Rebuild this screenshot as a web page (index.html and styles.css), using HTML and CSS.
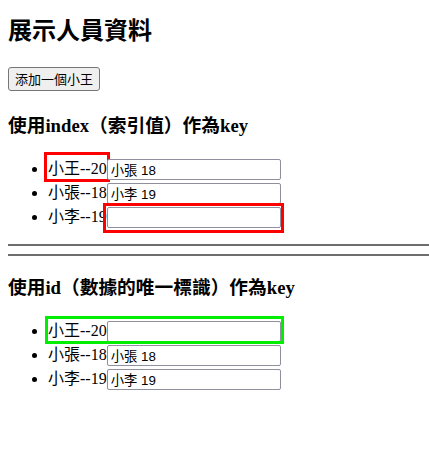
FILE: index.html
```html
<!DOCTYPE html>
<html>
<head>
<meta charset="utf-8">
<link rel="stylesheet" href="styles.css">
</head>
<body>
<div class="app">
  <h2 class="title">展示人員資料</h2>
  <div class="actions"><button class="add-btn">添加一個小王</button></div>
  <h3 class="section-title first">使用index（索引值）作為key</h3>
  <ul class="list">
    <li><span class="row"><span class="name mark-red">小王--20</span><span class="field-wrap"><input class="field" type="text" value="小張 18"></span></span></li>
    <li><span class="row"><span class="name">小張--18</span><span class="field-wrap"><input class="field" type="text" value="小李 19"></span></span></li>
    <li><span class="row"><span class="name">小李--19</span><span class="field-wrap mark-red-input"><input class="field" type="text" value=""></span></span></li>
  </ul>
  <div class="rule rule-top"></div>
  <div class="rule"></div>
  <h3 class="section-title second">使用id（數據的唯一標識）作為key</h3>
  <ul class="list">
    <li><span class="row mark-green"><span class="name">小王--20</span><span class="field-wrap"><input class="field" type="text" value=""></span></span></li>
    <li><span class="row"><span class="name">小張--18</span><span class="field-wrap"><input class="field" type="text" value="小張 18"></span></span></li>
    <li><span class="row"><span class="name">小李--19</span><span class="field-wrap"><input class="field" type="text" value="小李 19"></span></span></li>
  </ul>
</div>
</body>
</html>
```

FILE: styles.css
```css
html, body {
  padding: 0;
  background: #fff;
}
html {
  overflow: hidden;
}
body {
  margin: 8px 0 8px 8px;
  font-family: "Liberation Serif", "Noto Sans CJK TC", serif;
  font-size: 16px;
  color: #000;
  text-spacing-trim: space-all;
}
.app {
  padding-top: 1px;
}
.title {
  font-size: 24px;
  line-height: 28px;
  font-weight: bold;
  margin: 8px 0 0;
}
.actions {
  display: flex;
  margin-top: 22px;
}
.add-btn {
  font-family: "Noto Sans CJK TC", "Liberation Sans", sans-serif;
  font-size: 13px;
  line-height: 20px;
  height: 24px;
  padding: 1px 6px;
  border: 1px solid #767676;
  border-radius: 3px;
  background: #efefef;
  color: #000;
  box-sizing: border-box;
}
.section-title {
  font-size: 18.72px;
  line-height: 22px;
  font-weight: bold;
  margin: 0;
}
.section-title.first {
  margin-top: 24px;
}
.section-title.second {
  margin-top: 21px;
}
.list {
  margin: 20px 0 0;
  padding-left: 40px;
}
.list li {
  height: 24px;
  line-height: 24px;
}
.row {
  display: inline-flex;
  align-items: center;
  height: 24px;
  vertical-align: top;
  position: relative;
}
.name {
  line-height: 24px;
  position: relative;
}
.field-wrap {
  display: flex;
  position: relative;
}
.field {
  font-family: "Liberation Sans", "Noto Sans CJK TC", sans-serif;
  font-size: 13.333px;
  width: 174px;
  height: 21px;
  box-sizing: border-box;
  padding: 1px 3px;
  margin: 0;
  border: 1px solid #8f8f9d;
  border-radius: 2px;
  background: #fff;
  color: #000;
}
.rule {
  margin: 8px 0;
  height: 2px;
  background: #6e6e6e;
}
.rule-top {
  margin-top: 15px;
}
.mark-red::after {
  content: "";
  position: absolute;
  left: -4px;
  right: -3px;
  top: -5px;
  bottom: -1px;
  border: 3px solid #ff0000;
}
.mark-red-input::after {
  content: "";
  position: absolute;
  left: -4px;
  right: -3px;
  top: -4px;
  bottom: -5px;
  border: 3px solid #ff0000;
}
.mark-green::after {
  content: "";
  position: absolute;
  left: -3px;
  right: -3px;
  top: -3px;
  bottom: -1px;
  border: 3px solid #00ee00;
}
```
